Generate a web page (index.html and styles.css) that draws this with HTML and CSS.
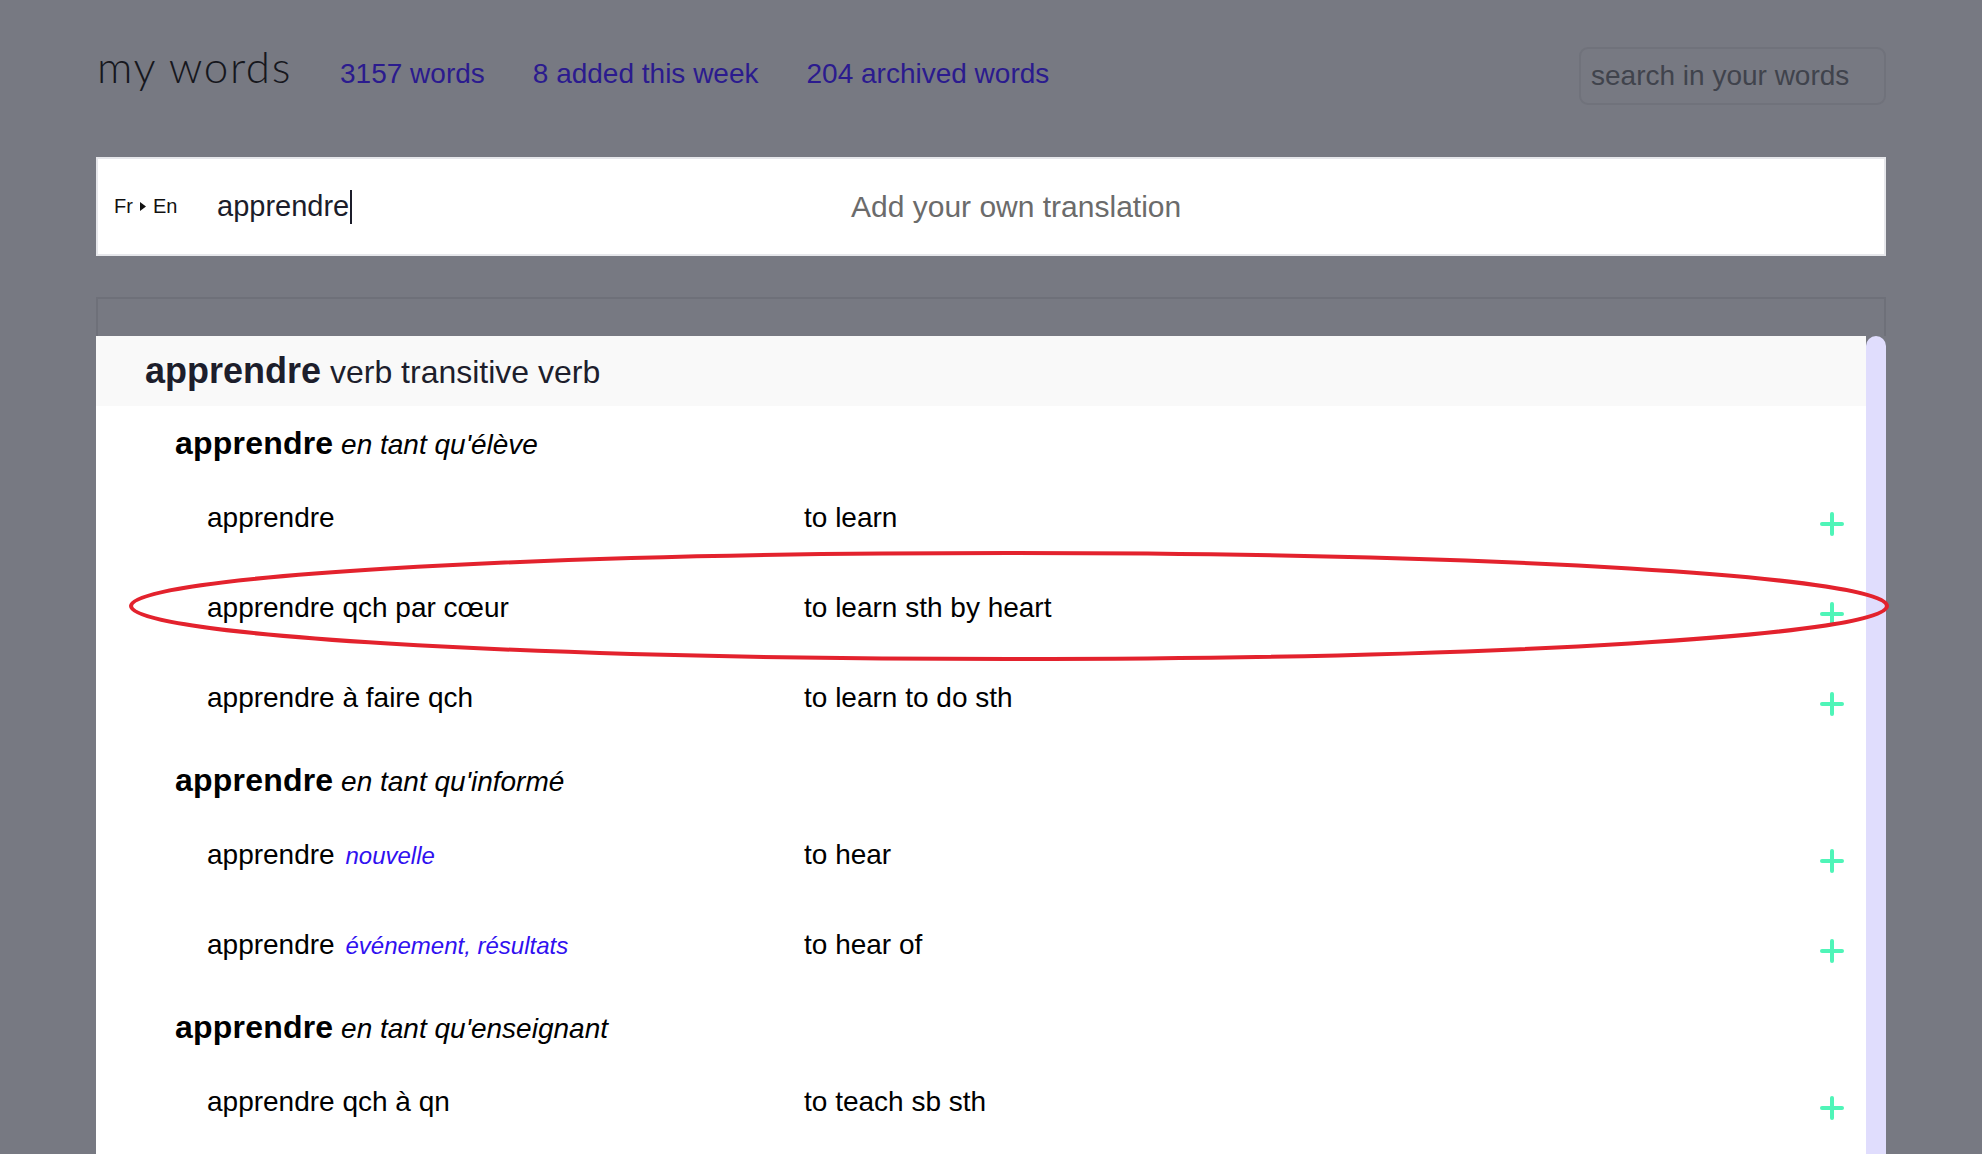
FILE: index.html
```html
<!DOCTYPE html>
<html lang="fr">
<head>
<meta charset="utf-8">
<title>my words</title>
<link rel="stylesheet" href="styles.css">
</head>
<body>
<div class="page">
  <header class="topbar">
    <div class="brand">
      <h1 class="title">my words</h1>
      <a class="stat" href="#">3157 words</a>
      <a class="stat" href="#">8 added this week</a>
      <a class="stat" href="#">204 archived words</a>
    </div>
    <div class="search">search in your words</div>
  </header>

  <section class="entry">
    <div class="lang">Fr<svg class="tri" width="6" height="9" viewBox="0 0 6 9"><path d="M0 0 L6 4.5 L0 9 Z" fill="#111"/></svg>En</div>
    <div class="word">apprendre<span class="caret"></span></div>
    <div class="own">Add your own translation</div>
  </section>

  <div class="band"></div>

  <section class="panel">
    <div class="content">
      <div class="headrow"><b class="hw">apprendre</b> <span class="pos">verb transitive verb</span></div>

      <div class="group">
        <div class="sub"><b>apprendre</b> <i>en tant qu'élève</i></div>
        <div class="row"><div class="src">apprendre</div><div class="tgt">to learn</div><span class="add"></span></div>
        <div class="row"><div class="src">apprendre qch par cœur</div><div class="tgt">to learn sth by heart</div><span class="add"></span></div>
        <div class="row"><div class="src">apprendre à faire qch</div><div class="tgt">to learn to do sth</div><span class="add"></span></div>
      </div>

      <div class="group">
        <div class="sub"><b>apprendre</b> <i>en tant qu'informé</i></div>
        <div class="row"><div class="src">apprendre <i class="ctx">nouvelle</i></div><div class="tgt">to hear</div><span class="add"></span></div>
        <div class="row"><div class="src">apprendre <i class="ctx">événement, résultats</i></div><div class="tgt">to hear of</div><span class="add"></span></div>
      </div>

      <div class="group">
        <div class="sub"><b>apprendre</b> <i>en tant qu'enseignant</i></div>
        <div class="row"><div class="src">apprendre qch à qn</div><div class="tgt">to teach sb sth</div><span class="add"></span></div>
      </div>
    </div>
    <div class="scrollbar"></div>
  </section>
</div>

<svg class="annot" width="1982" height="1154" viewBox="0 0 1982 1154">
  <ellipse cx="1009" cy="606" rx="878" ry="53" fill="none" stroke="#e3222d" stroke-width="4"/>
</svg>
</body>
</html>
```

FILE: styles.css
```css
html, body {
  margin: 0;
  padding: 0;
}
body {
  background: #777982;
  font-family: "Liberation Sans", Arial, sans-serif;
  height: 1154px;
  overflow: hidden;
  position: relative;
}
.page {
  padding: 0 96px;
}
.topbar {
  display: flex;
  justify-content: space-between;
  align-items: flex-start;
  padding-top: 47px;
  height: 58px;
}
.brand {
  display: flex;
  align-items: baseline;
  margin-top: -1px;
}
.title {
  margin: 0 48px 0 1px;
  font-family: Lato, "Open Sans", sans-serif;
  font-weight: 300;
  font-size: 44px;
  line-height: 40px;
  color: #16171d;
  letter-spacing: 1.6px;
}
.stat {
  font-size: 28px;
  line-height: 40px;
  color: #2b1b8e;
  text-decoration: none;
  margin-right: 48px;
}
.search {
  box-sizing: border-box;
  width: 307px;
  height: 58px;
  border: 2px solid #70727b;
  border-radius: 9px;
  padding-left: 10px;
  font-size: 28px;
  line-height: 54px;
  color: #40434c;
}
.entry {
  margin-top: 52px;
  box-sizing: border-box;
  height: 99px;
  background: #fff;
  border: 2px solid #e6e7eb;
  display: flex;
  align-items: center;
  padding-left: 16px;
}
.lang {
  font-size: 20px;
  color: #111;
  display: flex;
  align-items: center;
  gap: 7px;
  width: 103px;
}
.tri {
  display: block;
}
.word {
  font-size: 29px;
  color: #1c1d2a;
  width: 634px;
  display: flex;
  align-items: center;
}
.caret {
  display: inline-block;
  width: 2px;
  height: 34px;
  background: #1c1d2a;
  margin-left: 1px;
}
.own {
  font-size: 30px;
  color: #6b6b6b;
}
.band {
  margin-top: 41px;
  height: 37px;
  border: 2px solid #6e7079;
  border-bottom: 0;
}
.panel {
  display: flex;
  height: 900px;
}
.content {
  flex: 1;
  background: #fff;
}
.scrollbar {
  width: 20px;
  background: #e0ddfd;
  border-radius: 10px 10px 0 0;
}
.headrow {
  height: 70px;
  line-height: 70px;
  background: #f9f9f9;
  padding-left: 49px;
  color: #1d1e2c;
  font-size: 32px;
}
.hw {
  font-size: 36px;
  font-weight: 700;
}
.pos {
  font-size: 32px;
}
.sub {
  padding-left: 79px;
  padding-top: 9px;
  line-height: 56px;
  font-size: 28px;
  color: #000;
}
.group:first-of-type .sub {
  padding-top: 1px;
  padding-bottom: 4px;
}
.sub b {
  font-size: 32px;
  letter-spacing: 0.2px;
}
.sub i {
  font-size: 28px;
}
.row {
  height: 90px;
  display: flex;
  align-items: center;
  padding-left: 111px;
  padding-right: 22px;
  font-size: 28px;
  color: #000;
}
.src {
  width: 597px;
}
.ctx {
  font-size: 24px;
  color: #3010f0;
  margin-left: 3px;
}
.tgt {
  flex: 1;
}
.add {
  position: relative;
  width: 24px;
  height: 24px;
  margin-top: 12px;
}
.add::before, .add::after {
  content: "";
  position: absolute;
  background: #4ff5b8;
  border-radius: 2px;
}
.add::before {
  left: 0;
  top: 10px;
  width: 24px;
  height: 4px;
}
.add::after {
  left: 10px;
  top: 0;
  width: 4px;
  height: 24px;
}
.annot {
  position: absolute;
  left: 0;
  top: 0;
  pointer-events: none;
}
```
